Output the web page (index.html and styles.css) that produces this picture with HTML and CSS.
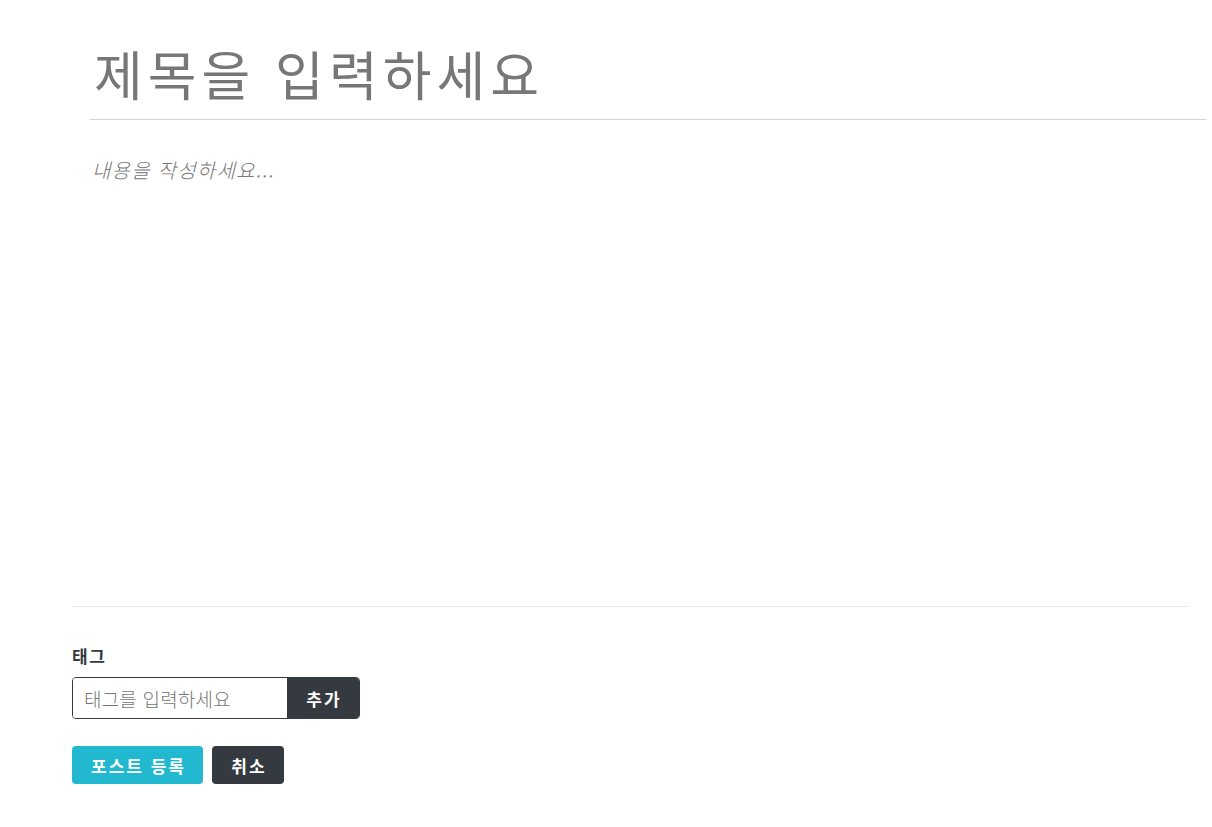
FILE: index.html
```html
<!DOCTYPE html>
<html lang="ko">
<head>
<meta charset="utf-8">
<title>글쓰기</title>
<link rel="stylesheet" href="styles.css">
</head>
<body>
<div class="editor">
  <input class="title" type="text" placeholder="제목을 입력하세요">
  <textarea class="content" placeholder="내용을 작성하세요..."></textarea>
  <div class="divider"></div>
  <div class="tags">
    <div class="tags-label">태그</div>
    <form class="tag-form">
      <input class="tag-input" type="text" placeholder="태그를 입력하세요">
      <button class="tag-add" type="button">추가</button>
    </form>
  </div>
  <div class="actions">
    <button class="btn btn-submit" type="button">포스트 등록</button>
    <button class="btn btn-cancel" type="button">취소</button>
  </div>
</div>
</body>
</html>
```
FILE: styles.css
```css
* { box-sizing: border-box; }
html, body { margin: 0; background: #fff; }
body {
  font-family: "Noto Sans CJK KR", "Noto Sans", sans-serif;
  color: #343a40;
}
.editor {
  width: 1116px;
  margin-left: 72px;
  display: flex;
  flex-direction: column;
}
.title {
  margin-left: 18px;
  width: 1116px;
  height: 89px;
  margin-top: 31px;
  border: none;
  border-bottom: 1px solid #d4d4d4;
  outline: none;
  padding: 0 4px 4px;
  font-family: inherit;
  font-size: 53px;
  font-weight: 400;
  letter-spacing: 5px;
  color: #777;
}
.title::placeholder { color: #777; }
.content {
  margin-left: 18px;
  width: 1098px;
  height: 466px;
  border: none;
  outline: none;
  resize: none;
  padding: 35px 2px 0;
  font-family: inherit;
  font-size: 20px;
  font-weight: 300;
  font-style: italic;
  letter-spacing: 1.2px;
  color: #777;
}
.content::placeholder { color: #777; }
.divider {
  height: 1px;
  background: #e9ecef;
  margin-top: 20px;
}
.tags { margin-top: 37px; }
.tags-label {
  font-size: 17px;
  font-weight: 700;
  line-height: 24px;
  letter-spacing: 1.5px;
  color: #343a40;
}
.tag-form {
  margin: 9px 0 0;
  display: flex;
  width: 288px;
  height: 42px;
  border: 1px solid #343a40;
  border-radius: 4px;
  overflow: hidden;
}
.tag-input {
  flex: 1;
  min-width: 0;
  border: none;
  outline: none;
  padding: 0 11px;
  font-family: inherit;
  font-size: 19px;
  font-weight: 300;
  letter-spacing: 0.2px;
  color: #343a40;
}
.tag-input::placeholder { color: #777; }
.tag-add {
  width: 72px;
  border: none;
  background: #343a40;
  color: #fff;
  font-family: inherit;
  font-size: 17px;
  font-weight: 700;
  letter-spacing: 2px;
  padding: 0 0 0 2px;
}
.actions {
  display: flex;
  gap: 9px;
  margin-top: 27px;
}
.btn {
  height: 38px;
  border: none;
  border-radius: 4px;
  color: #fff;
  font-family: inherit;
  font-size: 17px;
  font-weight: 700;
  letter-spacing: 2px;
  padding: 0 0 0 2px;
}
.btn-submit { background: #22b8cf; width: 131px; }
.btn-cancel { background: #343a40; width: 72px; }
```
